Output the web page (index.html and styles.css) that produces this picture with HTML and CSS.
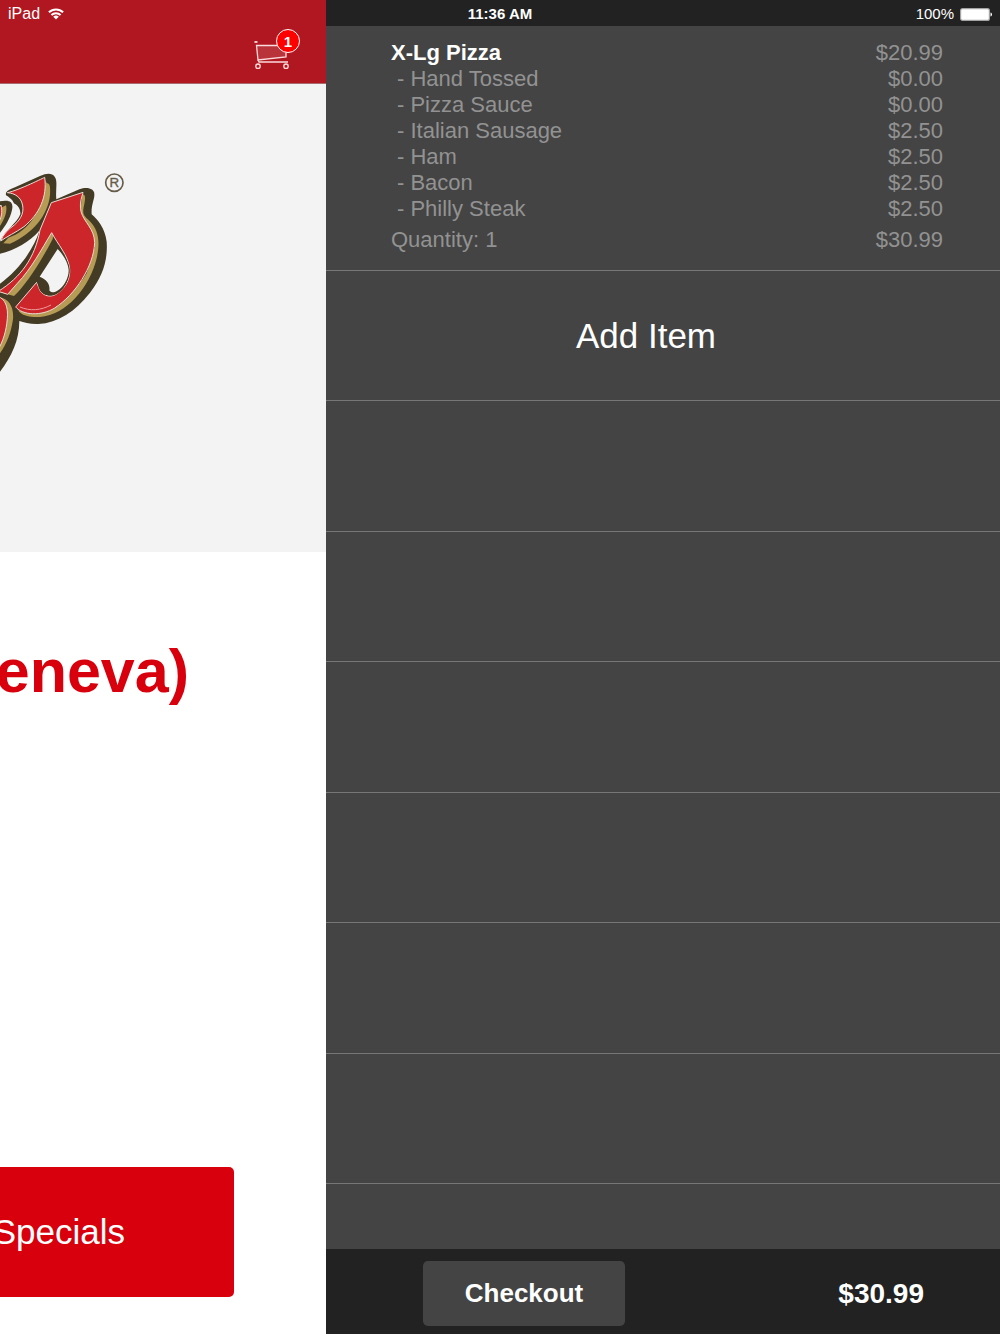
FILE: index.html
```html
<!DOCTYPE html>
<html lang="en">
<head>
<meta charset="utf-8">
<meta name="viewport" content="width=device-width, initial-scale=1">
<title>Your order</title>
<link rel="stylesheet" href="styles.css">
</head>
<body>
<div class="app">
  <header class="status">
    <span class="status-left">iPad
      <svg class="wifi" viewBox="0 0 16 12" aria-hidden="true">
        <path d="M.9 4.3a10.2 10.2 0 0 1 14.2 0M3.400 7a6.600 6.600 0 0 1 9.200 0" fill="none" stroke="#fff" stroke-width="2"/>
        <path d="M8 11.600 5.200 8.800a4 4 0 0 1 5.600 0z" fill="#fff"/>
      </svg>
    </span>
    <span class="clock">11:36 AM</span>
    <span class="status-right">100%
      <svg class="battery" viewBox="0 0 32 13" aria-hidden="true">
        <rect x=".6" y=".6" width="28.800" height="11.800" rx="2" fill="#fff" stroke="#a3a3a3" stroke-width="1.200"/>
        <path d="M30.500 4.500c2 .7 2 3.300 0 4z" fill="#fff"/>
      </svg>
    </span>
  </header>

  <main class="store">
    <div class="store-bar">
      <button class="cart" type="button" aria-label="Cart">
        <svg class="cart-icon" viewBox="0 0 36 30" fill="none" stroke="#fbdcdd" stroke-width="1.300" aria-hidden="true">
          <path d="M2.500 5.500H32v11.500L4 20z" fill="#fff" fill-opacity=".12"/>
          <path d="M.5 2H3.500" stroke-width="1.800"/>
          <path d="M4 20l1 2h29"/>
          <circle cx="4" cy="26.200" r="2.200"/>
          <circle cx="32" cy="26.200" r="2.200"/>
        </svg>
        <span class="badge">1</span>
      </button>
    </div>
    <div class="hero">
      <svg class="logo" viewBox="0 0 420 660" aria-hidden="true">
        <path fill="#443b25" d="M0 124 15 122C30 121 40 128 38 145V158C48 138 45 122 18 106 15 94 28 89 45 82L120 48Q152 34 164 50C174 62 166 92 169 118L238 88C262 79 284 86 283 103 284 118 273 135 275 163 294 180 315 205 320 245 324 300 308 350 270 398 225 455 175 488 115 492 92 493 72 488 58 483 58 540 35 590 0 635z"/>
        <path fill="#f3f3f3" d="M0 281C45 272 90 245 119 211 98 275 50 335 0 371zM0 243V218C16 198 30 177 36 150 40 136 36 130 34 129 48 128 63 144 61 163 50 190 22 205 0 243z"/>
        <path fill="#b69b54" d="M0 145 18 136C22 150 17 172 0 198zM140 70C151 70 151 82 150 105 144 165 100 220 30 251L10 250 25 233C85 215 130 150 137 60zM0 397 42 408C75 378 120 310 158 237L161 218 153 212 40 380zM247 103C256 104 257 110 253 132 246 163 250 165 268 182 298 211 300 250 290 295 270 380 200 465 120 471 90 472 65 468 54 451 120 470 210 425 260 340L285 260 240 160zM0 412C28 418 42 442 39 478 33 520 20 552 0 580z"/>
        <path fill="#cc252a" stroke="#eadbd3" stroke-width="3" d="M22 98C56 91 134 52 134 52 142 110 119 161 72 200 48 217 20 230 2 243 10 222 24 209 43 195 65 176 74 153 66 129 61 113 47 100 22 98zM-5 145 3 135C8 157 4 175-5 188zM154 128 249 97C248 105 237 126 243 155 252 187 283 205 284 248 281 320 225 405 164 444 124 469 68 466 47 441L110 367 116 382C122 405 148 416 170 402 199 382 211 355 209 327 205 286 173 253 155 218 124 268 95 325 52 370L23 403-5 394C62 352 105 294 120 210zM-5 410C15 417 25 440 22 475 19 515 8 545-5 568z"/>
        <path fill="#443b25" d="M160 240C180 275 204 292 209 327 211 354 193 390 170 402 145 413 122 403 116 382L110 363 117 340z"/>
        <path fill="#f3f3f3" d="M173 267C195 290 204 311 206 329 207 354 191 381 172 392 160 399 150 397 148 391 151 375 141 358 119 350z"/>
        <path fill="none" stroke="#ef9b9b" stroke-width="3" d="M60 441C90 454 123 451 153 435"/>
        <circle cx="343" cy="68" r="26" fill="none" stroke="#655b48" stroke-width="5"/>
        <text class="mark" x="343" y="82">R</text>
      </svg>
    </div>
    <div class="store-body">
      <h1 class="location">eneva)</h1>
      <button class="specials" type="button">Specials</button>
    </div>
  </main>

  <aside class="order">
    <section class="item">
      <dl class="lines">
        <div class="line"><dt class="name">X-Lg Pizza</dt><dd>$20.99</dd></div>
        <div class="line option"><dt>- Hand Tossed</dt><dd>$0.00</dd></div>
        <div class="line option"><dt>- Pizza Sauce</dt><dd>$0.00</dd></div>
        <div class="line option"><dt>- Italian Sausage</dt><dd>$2.50</dd></div>
        <div class="line option"><dt>- Ham</dt><dd>$2.50</dd></div>
        <div class="line option"><dt>- Bacon</dt><dd>$2.50</dd></div>
        <div class="line option"><dt>- Philly Steak</dt><dd>$2.50</dd></div>
        <div class="line total"><dt>Quantity: 1</dt><dd>$30.99</dd></div>
      </dl>
    </section>
    <div class="rows">
      <button class="row add" type="button">Add Item</button>
      <div class="row"></div>
      <div class="row"></div>
      <div class="row"></div>
      <div class="row"></div>
      <div class="row"></div>
      <div class="row"></div>
      <div class="row half"></div>
    </div>
    <footer class="checkout-bar">
      <button class="checkout" type="button">Checkout</button>
      <strong class="sum">$30.99</strong>
    </footer>
  </aside>
</div>
</body>
</html>
```
FILE: styles.css
```css
* { box-sizing: border-box; }

body {
  margin: 0;
  font-family: "Liberation Sans", Arial, sans-serif;
}

button {
  border: 0;
  padding: 0;
  font: inherit;
  color: #fff;
  background: none;
}

.app {
  position: relative;
  display: grid;
  grid-template-columns: 326px 1fr;
  min-height: 100vh;
}

/* Status bar floats over both panes */
.status {
  position: absolute;
  inset: 0 0 auto;
  display: grid;
  grid-template-columns: 1fr auto 1fr;
  padding: 0 8px;
  font-size: 15px;
  line-height: 28px;
  color: #fff;
}

.status-left,
.status-right {
  display: flex;
  align-items: center;
  gap: 6px;
}

.status-right { justify-content: flex-end; }
.status-left { gap: 8px; font-size: 16px; }
.clock { font-weight: bold; }
.wifi { width: 16px; height: 12px; }
.battery { width: 32px; height: 13px; }

/* Store page, slid to the left */
.store {
  display: flex;
  flex-direction: column;
  overflow: hidden;
  background: #fff;
}

.store-bar {
  display: flex;
  justify-content: flex-end;
  align-items: flex-end;
  height: 84px;
  padding: 0 26px 13px 0;
  background: #b01720;
  border-bottom: 1px solid #a86a6c;
}

.cart {
  position: relative;
  width: 46px;
  height: 41px;
  display: flex;
  align-items: flex-end;
}

.cart-icon { width: 36px; height: 30px; }

.badge {
  position: absolute;
  top: 0;
  right: 0;
  width: 24px;
  height: 24px;
  border: 1px solid #fff;
  border-radius: 50%;
  background: #fe0000;
  font-size: 15px;
  font-weight: bold;
  line-height: 23px;
  text-align: center;
}

.hero {
  height: 468px;
  padding-top: 76px;
  background: #f3f3f3;
}

.logo {
  display: block;
  width: 140px;
  height: 220px;
}

.mark {
  font-size: 40px;
  fill: #655b48;
  stroke: #655b48;
  stroke-width: 1px;
  text-anchor: middle;
}

.store-body {
  flex: 1;
  display: flex;
  flex-direction: column;
  justify-content: space-between;
  align-items: flex-start;
  padding: 83px 0 37px;
}

.location {
  align-self: flex-end;
  margin: 0 137px 0 0;
  font-size: 61px;
  line-height: 72px;
  color: #d8000c;
}

.specials {
  display: flex;
  justify-content: flex-end;
  align-items: center;
  width: 234px;
  height: 130px;
  padding-right: 109px;
  border-radius: 0 5px 5px 0;
  background: #d8000c;
  font-size: 35px;
}

/* Order panel */
.order {
  display: flex;
  flex-direction: column;
  background: #444;
  border-top: 26px solid #222;
}

.item {
  padding: 14px 57px 17px 65px;
  border-bottom: 1px solid #777;
}

.lines {
  margin: 0;
  font-size: 22px;
  line-height: 26px;
  color: #929292;
}

.line {
  display: flex;
  justify-content: space-between;
}

.line dd { margin: 0; }
.option { padding-left: 6px; }
.total { margin-top: 5px; }

.name {
  font-weight: bold;
  color: #fff;
}

.rows {
  flex: 1;
  display: flex;
  flex-direction: column;
}

.row {
  flex: 2 0 0;
  border-bottom: 1px solid #777;
}

.half {
  flex-grow: 1;
  border-bottom: 0;
}

.add {
  padding-right: 34px;
  font-size: 35px;
}

.checkout-bar {
  display: flex;
  justify-content: space-between;
  align-items: center;
  height: 85px;
  padding: 4px 76px 0 97px;
  background: #222;
}

.checkout {
  width: 202px;
  height: 65px;
  border-radius: 5px;
  background: #444;
  font-size: 26px;
  font-weight: bold;
}

.sum {
  font-size: 28px;
  color: #fff;
}
```
